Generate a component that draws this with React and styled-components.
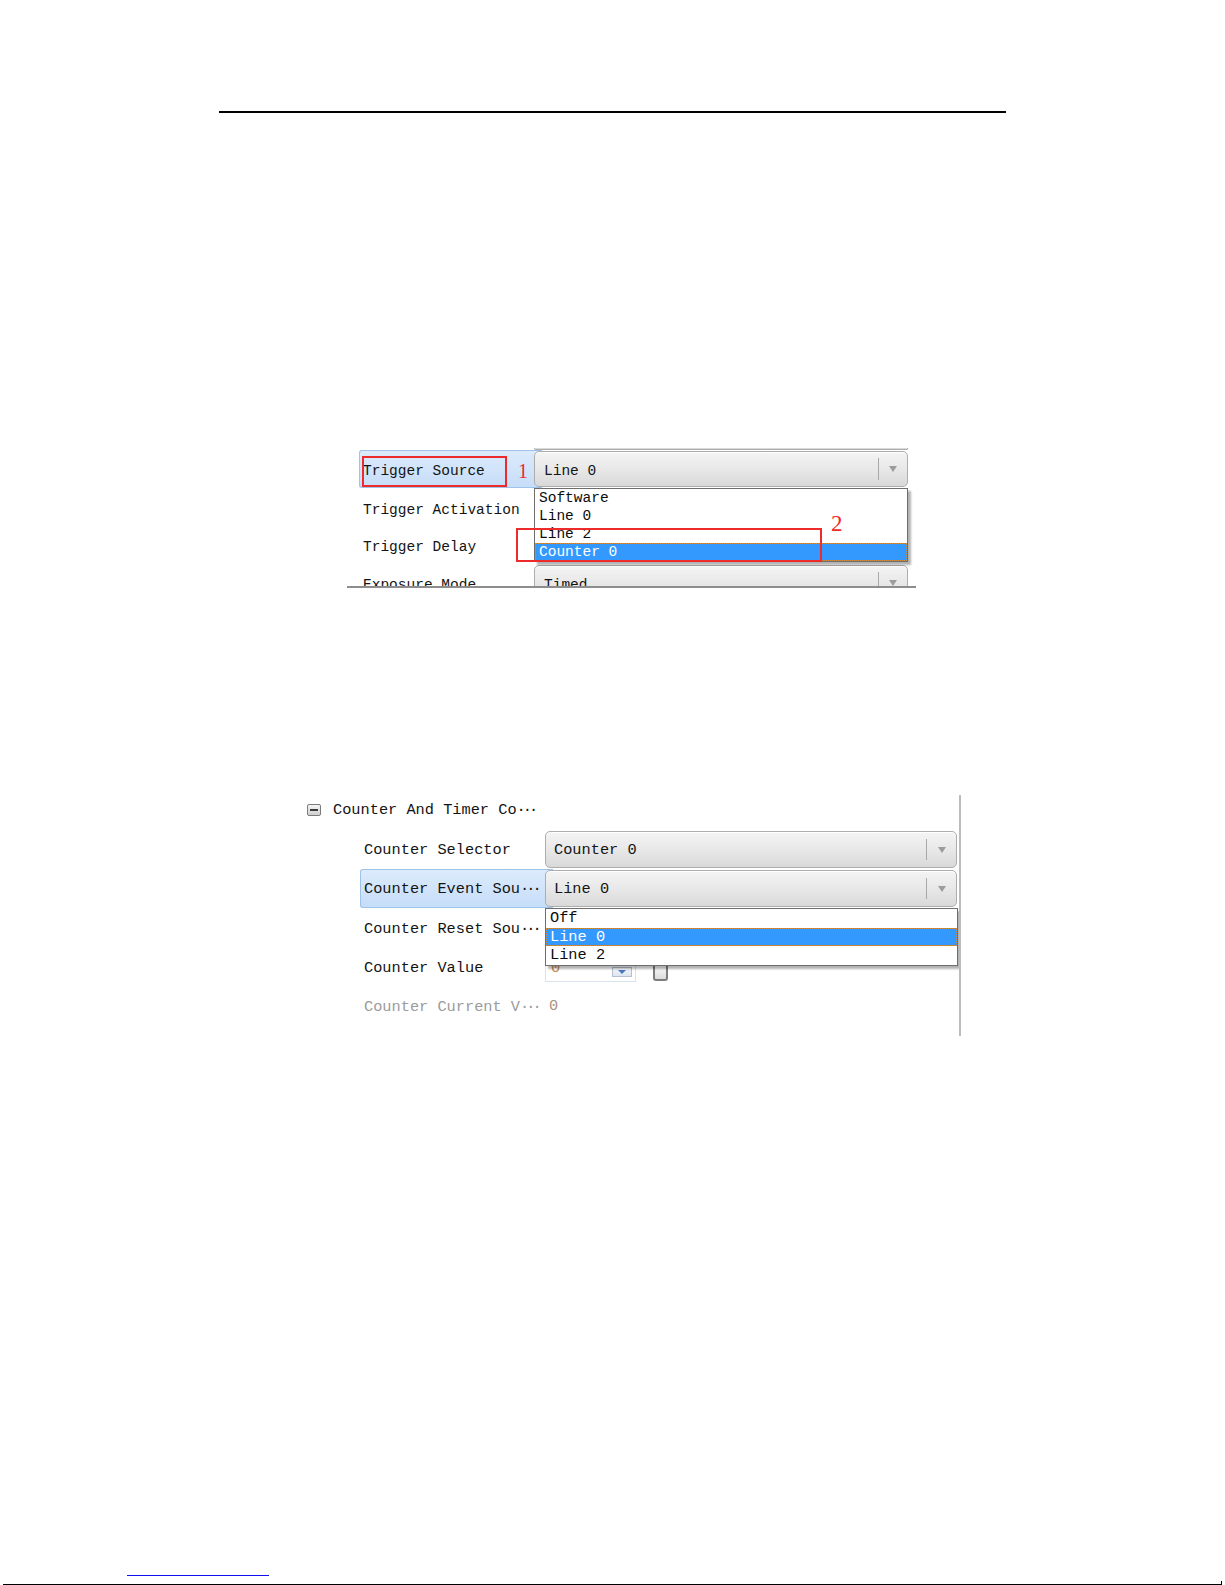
import React from 'react';
import styled, { createGlobalStyle, css } from 'styled-components';

const UI_FONT = `"Liberation Mono", "DejaVu Sans Mono", monospace`;

const GlobalStyle = createGlobalStyle`
  html, body {
    margin: 0;
    background: #fff;
  }
`;

const Page = styled.div`
  width: 1225px;
  height: 1585px;
  display: flex;
  flex-direction: column;
  box-sizing: border-box;
  background: #fff;
`;

const HeaderRule = styled.div`
  margin: 111px 0 0 219px;
  width: 787px;
  height: 2px;
  background: #000;
`;

const Shot = styled.div`
  position: relative;
  overflow: hidden;
  box-sizing: border-box;
  flex: none;
  margin-top: ${p => p.$top}px;
  margin-left: ${p => p.$left}px;
  width: ${p => p.$w}px;
  height: ${p => p.$h}px;
  font-family: ${UI_FONT};
  font-size: ${p => p.$fs}px;
  color: #141414;
  background: #fff;
  ${p => p.$edge === 'bottom' && css`border-bottom: 2px solid #8d8d8d;`}
  ${p => p.$edge === 'right' && css`border-right: 2px solid #bcbcbc;`}
`;

const PrevEdge = styled.div`
  height: 2px;
  margin-left: ${p => p.$left}px;
  width: ${p => p.$w}px;
  box-sizing: border-box;
  border: 1px solid #adadad;
  border-top: none;
  border-radius: 0 0 4px 4px;
  background: #dadada;
`;

const GroupHeader = styled.div`
  height: 35px;
  box-sizing: border-box;
  display: flex;
  align-items: center;
  gap: 12px;
  padding: 0 0 6px 4px;
  white-space: nowrap;
`;

const Expander = styled.span`
  position: relative;
  width: 14px;
  height: 12px;
  box-sizing: border-box;
  border: 1px solid #7b7b7b;
  border-radius: 2px;
  background: linear-gradient(#f6f6f6, #cfcfcf);
  &::after {
    content: '';
    position: absolute;
    left: 2px;
    right: 2px;
    top: 4px;
    height: 2px;
    background: #3a3a3a;
  }
`;

const Ellipsis = styled.span`
  letter-spacing: -3px;
`;

const Row = styled.div`
  display: grid;
  grid-template-columns: ${p => p.$cols};
  height: ${p => p.$h}px;
`;

const Label = styled.div`
  display: flex;
  align-items: center;
  box-sizing: border-box;
  white-space: nowrap;
  padding-top: ${p => p.$nudge || 0}px;
  padding-left: ${p => p.$indent}px;
  color: ${p => (p.$muted ? '#9b9b9b' : 'inherit')};
  ${p =>
    p.$active &&
    css`
      margin-left: ${p.$indent - 4}px;
      margin-right: -8px;
      padding-left: 3px;
      border: 1px solid #9fc2ea;
      border-right: none;
      border-radius: 3px 0 0 3px;
      background: linear-gradient(#dcebfc, #c6ddf8);
    `}
`;

const Value = styled.div`
  position: relative;
  display: flex;
  align-items: stretch;
  padding: 1px 0;
  min-width: 0;
`;

const PlainValue = styled.div`
  display: flex;
  align-items: center;
  padding-left: 4px;
  color: #a8927e;
`;

const Combo = styled.div`
  flex: 1;
  display: flex;
  align-items: center;
  box-sizing: border-box;
  padding-left: ${p => p.$pad}px;
  border: 1px solid #adadad;
  border-radius: 5px;
  background: linear-gradient(#f4f4f4, #e8e8e8 50%, #d9d9d9);
  box-shadow: inset 0 1px 0 #fff;
`;

const ComboText = styled.span`
  flex: 1;
  white-space: nowrap;
  padding-top: ${p => p.$nudge || 0}px;
`;

const ComboSep = styled.span`
  width: 1px;
  height: 62%;
  background: #a8a8a8;
`;

const ComboArrow = styled.span`
  width: ${p => p.$w}px;
  display: flex;
  justify-content: center;
  &::before {
    content: '';
    border-left: 4.5px solid transparent;
    border-right: 4.5px solid transparent;
    border-top: 6px solid #9c9c9c;
  }
`;

const DropList = styled.ul`
  position: absolute;
  z-index: 2;
  top: ${p => p.$y}px;
  left: ${p => p.$x}px;
  width: ${p => p.$w}px;
  margin: 0;
  padding: 0;
  list-style: none;
  box-sizing: border-box;
  background: #fff;
  border: 1px solid #6e6e6e;
  box-shadow: 3px 3px 2px rgba(0, 0, 0, 0.3);
`;

const DropItem = styled.li`
  height: ${p => p.$h || 18}px;
  line-height: ${p => p.$h || 18}px;
  padding-left: 4px;
  white-space: nowrap;
  color: #0c0c0c;
  ${p =>
    p.$selected &&
    css`
      background: #3399ff;
      color: #fff;
      outline: 1px dotted #d38c3c;
      outline-offset: -1px;
    `}
`;

const SpinRow = styled.div`
  display: flex;
  align-items: flex-end;
  gap: 17px;
  padding: 5px 0 4px;
`;

const SpinBox = styled.div`
  width: 91px;
  height: 30px;
  box-sizing: border-box;
  display: flex;
  align-items: flex-end;
  justify-content: space-between;
  padding: 0 3px 4px 5px;
  border: 1px solid #dbe4ee;
  background: #fff;
  color: #c58a4e;
`;

const SpinText = styled.span`
  line-height: 18px;
  margin-bottom: 0;
`;

const SpinButton = styled.span`
  width: 20px;
  height: 10px;
  box-sizing: border-box;
  display: flex;
  align-items: center;
  justify-content: center;
  border: 1px solid #b4c0d0;
  background: linear-gradient(#f4f7fb, #dde5ef);
  &::before {
    content: '';
    border-left: 4px solid transparent;
    border-right: 4px solid transparent;
    border-top: 4px solid #4a78c0;
  }
`;

const CheckBox = styled.span`
  width: 15px;
  height: 18px;
  margin-bottom: 1px;
  box-sizing: border-box;
  border: 2px solid #7d7d7d;
  border-radius: 3px;
  background: linear-gradient(#fdfdfd, #dcdcdc);
`;

const Mark = styled.div`
  position: absolute;
  z-index: 3;
  left: ${p => p.$x}px;
  top: ${p => p.$y}px;
  width: ${p => p.$w}px;
  height: ${p => p.$h}px;
  box-sizing: border-box;
  border: 2px solid #ee2b2b;
`;

const Tag = styled.span`
  position: absolute;
  z-index: 3;
  left: ${p => p.$x}px;
  top: ${p => p.$y}px;
  font-family: "Liberation Serif", "DejaVu Serif", serif;
  font-size: ${p => p.$size}px;
  line-height: 1;
  color: #f02a2a;
`;

const Spacer = styled.div`
  flex: 1;
`;

const FootRule = styled.div`
  margin: 0 0 8px 127px;
  width: 142px;
  height: 1px;
  background: #1010f0;
`;

const PageEdge = styled.div`
  position: relative;
  margin: 0 3px;
  height: 1px;
  background: #000;
  &::after {
    content: '';
    position: absolute;
    right: 0;
    bottom: 0;
    width: 1px;
    height: 4px;
    background: #000;
  }
`;

const Dots = () => <Ellipsis>···</Ellipsis>;

function TriggerShot() {
  const cols = '187px 374px';
  return (
    <Shot $top={335} $left={347} $w={569} $h={140} $fs={14.5} $edge="bottom">
      <PrevEdge $left={187} $w={374} />
      <Row $cols={cols} $h={38}>
        <Label $indent={16} $nudge={3} $active>Trigger Source</Label>
        <Value>
          <Combo $pad={9}>
            <ComboText $nudge={3}>Line 0</ComboText>
            <ComboSep />
            <ComboArrow $w={28} />
          </Combo>
        </Value>
      </Row>
      <Row $cols={cols} $h={38}>
        <Label $indent={16} $nudge={5}>Trigger Activation</Label>
        <Value />
      </Row>
      <Row $cols={cols} $h={38}>
        <Label $indent={16} $nudge={4}>Trigger Delay</Label>
        <Value />
      </Row>
      <Row $cols={cols} $h={38}>
        <Label $indent={16} $nudge={4}>Exposure Mode</Label>
        <Value>
          <Combo $pad={9}>
            <ComboText $nudge={4}>Timed</ComboText>
            <ComboSep />
            <ComboArrow $w={28} />
          </Combo>
        </Value>
      </Row>

      <DropList $x={187} $y={40} $w={374}>
        <DropItem>Software</DropItem>
        <DropItem>Line 0</DropItem>
        <DropItem>Line 2</DropItem>
        <DropItem $selected>Counter 0</DropItem>
      </DropList>

      <Mark $x={15} $y={8} $w={145} $h={31} />
      <Tag $x={171} $y={13} $size={20}>1</Tag>
      <Mark $x={169} $y={80} $w={306} $h={34} />
      <Tag $x={484} $y={64} $size={23}>2</Tag>
    </Shot>
  );
}

function CounterShot() {
  const cols = '242px 412px';
  return (
    <Shot $top={207} $left={303} $w={658} $h={241} $fs={15.3} $edge="right">
      <GroupHeader>
        <Expander />
        <span>Counter And Timer Co<Dots /></span>
      </GroupHeader>
      <Row $cols={cols} $h={39}>
        <Label $indent={61}>Counter Selector</Label>
        <Value>
          <Combo $pad={8}>
            <ComboText>Counter 0</ComboText>
            <ComboSep />
            <ComboArrow $w={29} />
          </Combo>
        </Value>
      </Row>
      <Row $cols={cols} $h={39}>
        <Label $indent={61} $nudge={1} $active>Counter Event Sou<Dots /></Label>
        <Value>
          <Combo $pad={8}>
            <ComboText $nudge={1}>Line 0</ComboText>
            <ComboSep />
            <ComboArrow $w={29} />
          </Combo>
        </Value>
      </Row>
      <Row $cols={cols} $h={39}>
        <Label $indent={61} $nudge={3}>Counter Reset Sou<Dots /></Label>
        <Value />
      </Row>
      <Row $cols={cols} $h={39}>
        <Label $indent={61} $nudge={3}>Counter Value</Label>
        <SpinRow>
          <SpinBox>
            <SpinText>0</SpinText>
            <SpinButton />
          </SpinBox>
          <CheckBox />
        </SpinRow>
      </Row>
      <Row $cols={cols} $h={39}>
        <Label $indent={61} $nudge={2} $muted>Counter Current V<Dots /></Label>
        <PlainValue>0</PlainValue>
      </Row>

      <DropList $x={242} $y={113} $w={413}>
        <DropItem $h={18.5}>Off</DropItem>
        <DropItem $h={18.5} $selected>Line 0</DropItem>
        <DropItem $h={18.5}>Line 2</DropItem>
      </DropList>
    </Shot>
  );
}

export default function App() {
  return (
    <Page>
      <GlobalStyle />
      <HeaderRule />
      <TriggerShot />
      <CounterShot />
      <Spacer />
      <FootRule />
      <PageEdge />
    </Page>
  );
}
